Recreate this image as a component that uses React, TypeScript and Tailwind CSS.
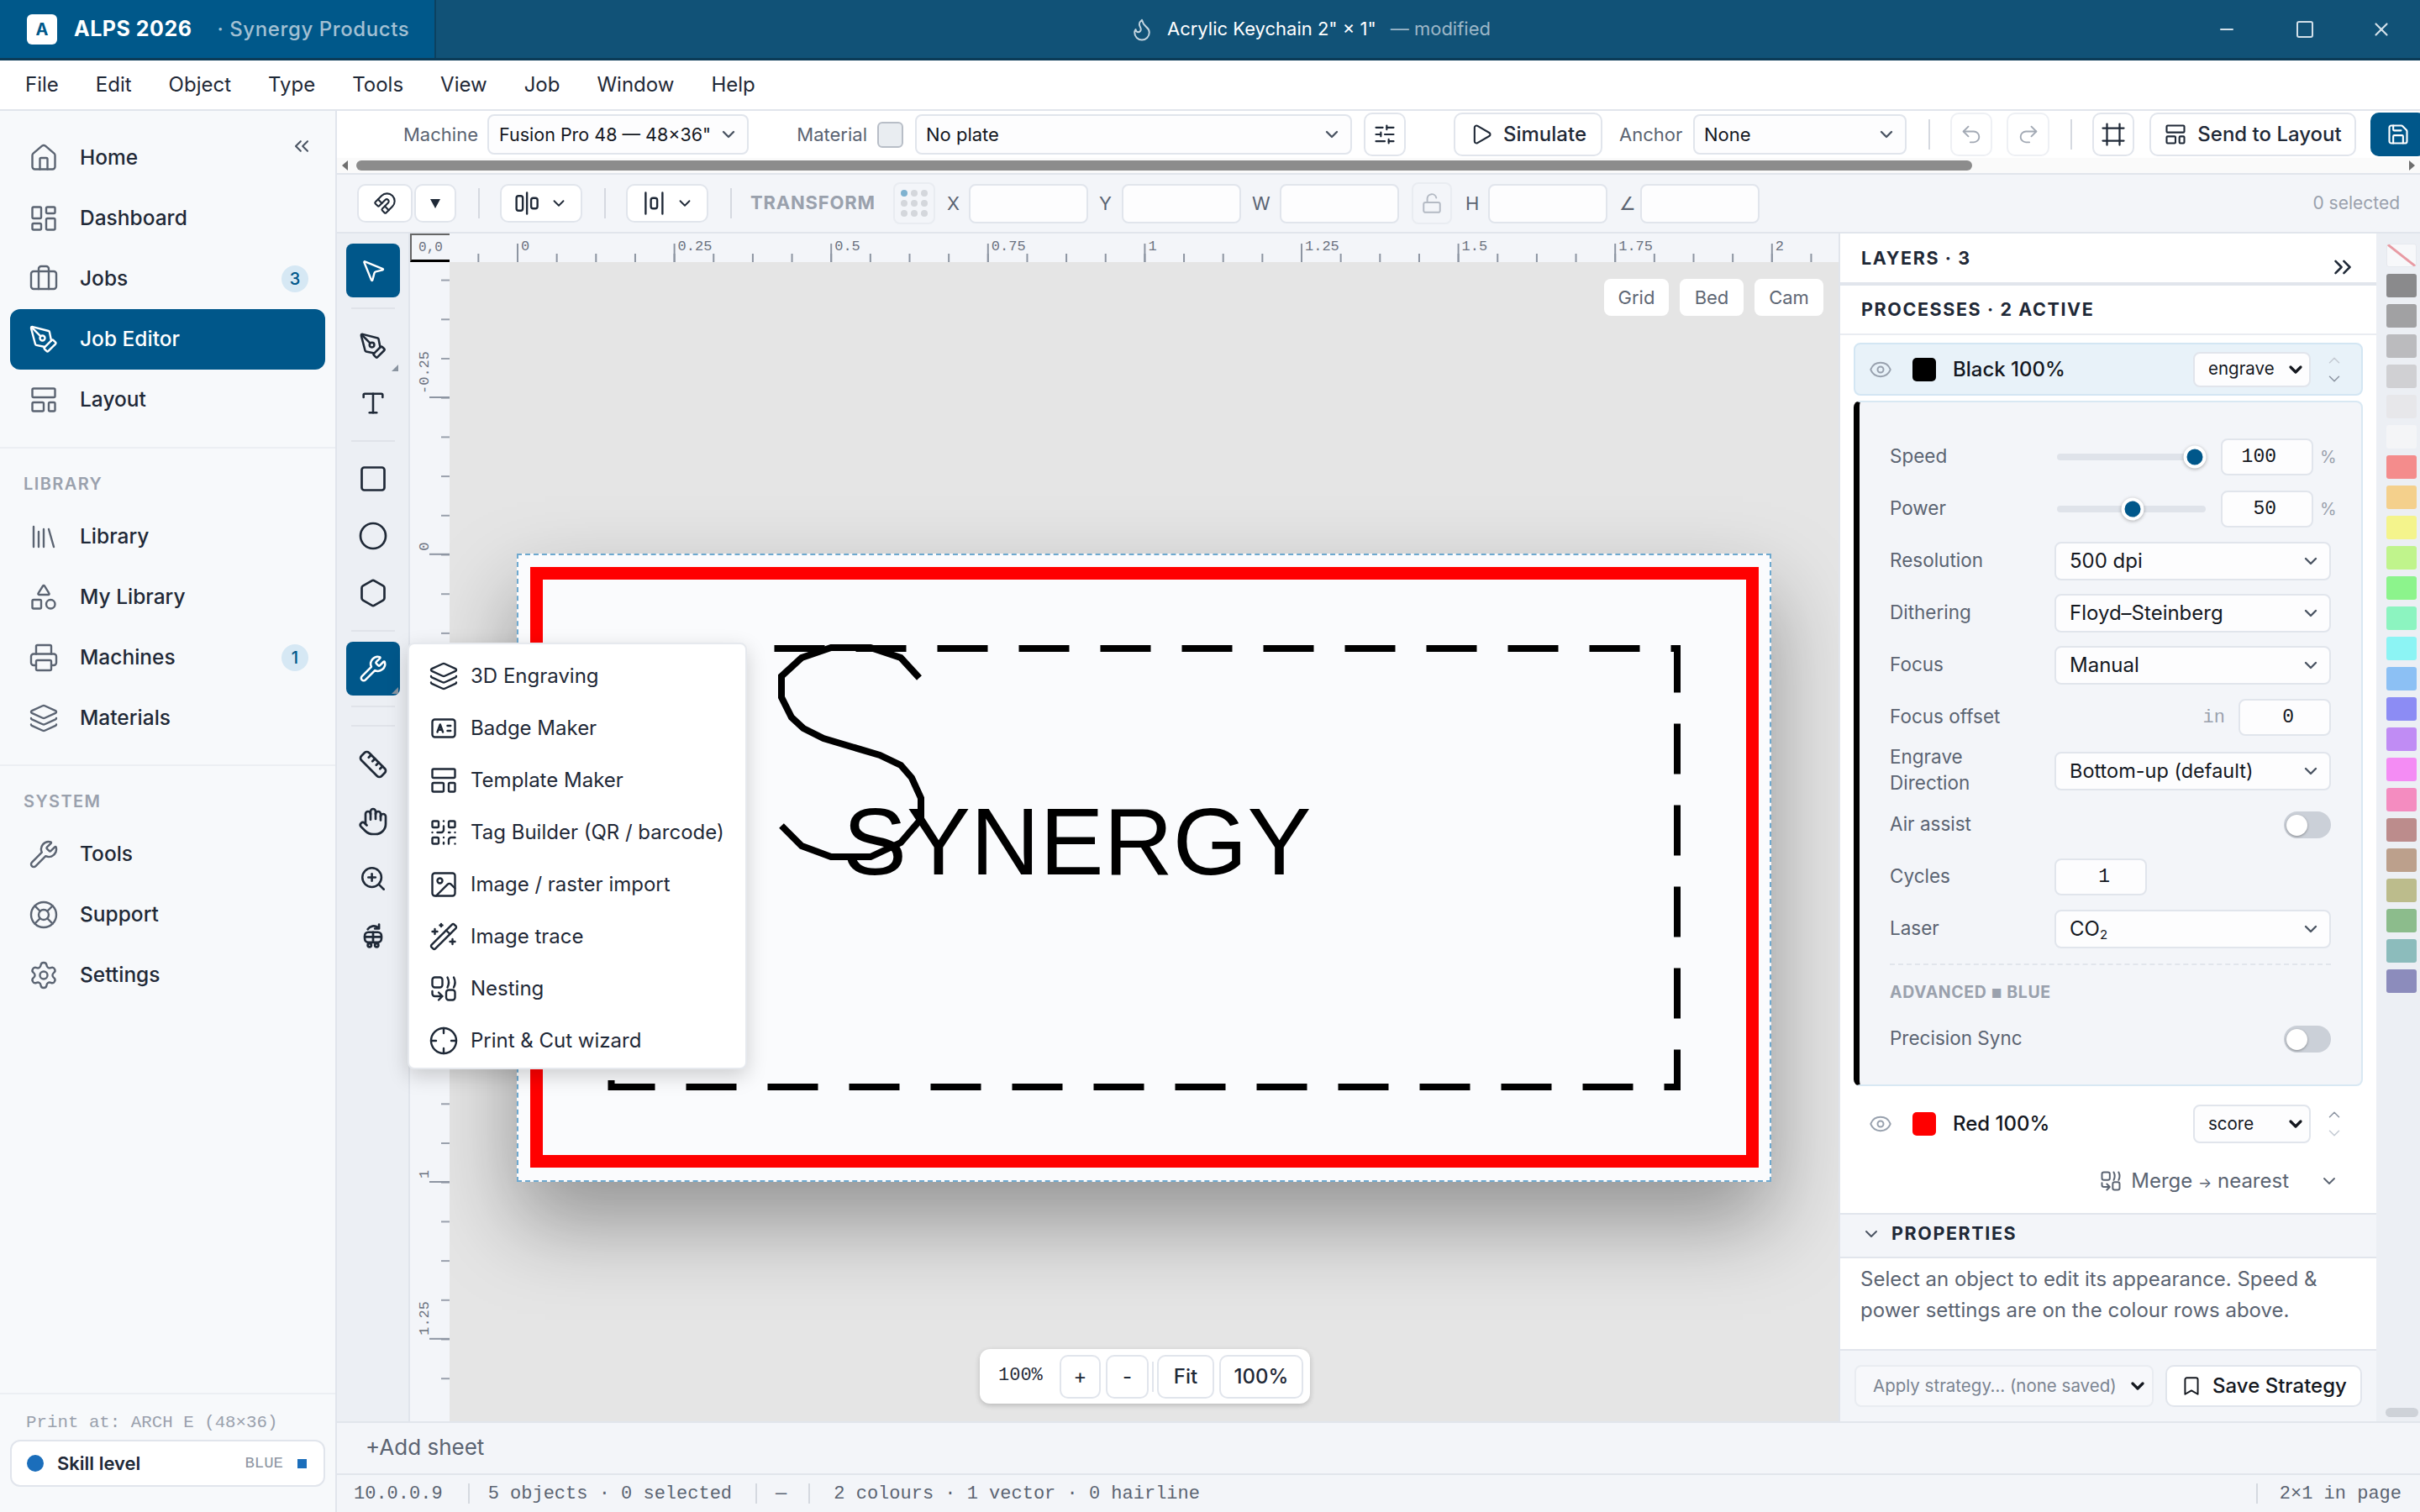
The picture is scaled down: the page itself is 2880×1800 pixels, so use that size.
import type { CSSProperties, ReactNode } from 'react';
import {
	Bookmark,
	Briefcase,
	ChevronDown,
	ChevronUp,
	ChevronsLeft,
	ChevronsRight,
	Circle,
	Crosshair,
	Eye,
	Flame,
	Frame,
	Hand,
	Hexagon,
	House,
	Image,
	Layers,
	LayoutDashboard,
	LayoutTemplate,
	Library,
	LifeBuoy,
	LockOpen,
	Magnet,
	Minus,
	MousePointer2,
	PenTool,
	Play,
	Printer,
	QrCode,
	Redo2,
	Ruler,
	Save,
	Settings,
	Shapes,
	SlidersHorizontal,
	Square,
	Type,
	Undo2,
	WandSparkles,
	Wrench,
	X,
	ZoomIn,
} from 'lucide-react';

const STROKE = 1.6;

const BadgeIcon = ({ size = 36 }: { size?: number }) => (
	<svg width={size} height={size} viewBox="0 0 24 24" fill="none" stroke="currentColor" strokeWidth={STROKE} strokeLinecap="round" strokeLinejoin="round">
		<rect x="3" y="5" width="18" height="14" rx="2" />
		<path d="M7 15l2.2-6 2.2 6M7.8 13.2h2.8M15 10h2.5M15 14h2.5" />
	</svg>
);

const NestIcon = ({ size = 36, sw = STROKE }: { size?: number; sw?: number }) => (
	<svg width={size} height={size} viewBox="0 0 24 24" fill="none" stroke="currentColor" strokeWidth={sw} strokeLinecap="round" strokeLinejoin="round">
		<rect x="3" y="3" width="8" height="8" rx="2" />
		<path d="M15 3c1.3 2.5 1.3 5.5 0 8M20 3c1.3 2.5 1.3 5.5 0 8" />
		<path d="M3 14v2a2 2 0 0 0 2 2h6M8 15l3 3-3 3" />
		<rect x="14" y="13" width="7" height="8" rx="2" />
	</svg>
);

const RobotIcon = ({ size = 36 }: { size?: number }) => (
	<svg width={size} height={size} viewBox="0 0 24 24" fill="none" stroke="currentColor" strokeWidth={1.9} strokeLinecap="round" strokeLinejoin="round">
		<path d="M7.5 6.5a6 6 0 0 1 8.5-1.5M17 2.5V6h-3.5" />
		<rect x="5" y="9" width="14" height="8.5" rx="3" />
		<path d="M5 13h14M12 9v8.5" />
		<circle cx="9" cy="20" r="1.5" />
		<circle cx="15" cy="20" r="1.5" />
	</svg>
);

const AlignSplitIcon = () => (
	<svg width={34} height={30} viewBox="0 0 27 24" fill="none" stroke="currentColor" strokeWidth={1.9} strokeLinecap="round" strokeLinejoin="round">
		<rect x="2" y="5" width="6" height="14" rx="2" />
		<path d="M12 2v20" />
		<rect x="16" y="7" width="6" height="10" rx="2" />
	</svg>
);

const AlignBetweenIcon = () => (
	<svg width={34} height={30} viewBox="0 0 27 24" fill="none" stroke="currentColor" strokeWidth={1.9} strokeLinecap="round" strokeLinejoin="round">
		<path d="M5 2v20M21 2v20" />
		<rect x="10" y="7" width="6" height="10" rx="2" />
	</svg>
);

const menus = ['File', 'Edit', 'Object', 'Type', 'Tools', 'View', 'Job', 'Window', 'Help'];

const mainNav = [
	{ label: 'Home', icon: House },
	{ label: 'Dashboard', icon: LayoutDashboard },
	{ label: 'Jobs', icon: Briefcase, badge: '3' },
	{ label: 'Job Editor', icon: PenTool, active: true },
	{ label: 'Layout', icon: LayoutTemplate },
];
const libraryNav = [
	{ label: 'Library', icon: Library },
	{ label: 'My Library', icon: Shapes },
	{ label: 'Machines', icon: Printer, badge: '1' },
	{ label: 'Materials', icon: Layers },
];
const systemNav = [
	{ label: 'Tools', icon: Wrench },
	{ label: 'Support', icon: LifeBuoy },
	{ label: 'Settings', icon: Settings },
];

const swatches = [
	'#8a8a8c', '#a1a1a3', '#bbbbbe', '#d0d0d3', '#e7e7ea', '#f4f5f7',
	'#f48c8c', '#f4d08c', '#f4f48c', '#c0f48c', '#8cf48c', '#8cf4c0',
	'#8cf4f4', '#8cc0f4', '#8c8cf4', '#c08cf4', '#f48cf4', '#f48cc0',
	'#bc8c8c', '#bca08c', '#bcbc8c', '#8cbc8c', '#8cbcbc', '#8c8cbc',
];

const toolMenu = [
	{ label: '3D Engraving', icon: <Layers size={36} strokeWidth={STROKE} /> },
	{ label: 'Badge Maker', icon: <BadgeIcon /> },
	{ label: 'Template Maker', icon: <LayoutTemplate size={36} strokeWidth={STROKE} /> },
	{ label: 'Tag Builder (QR / barcode)', icon: <QrCode size={36} strokeWidth={STROKE} /> },
	{ label: 'Image / raster import', icon: <Image size={36} strokeWidth={STROKE} /> },
	{ label: 'Image trace', icon: <WandSparkles size={36} strokeWidth={STROKE} /> },
	{ label: 'Nesting', icon: <NestIcon /> },
	{ label: 'Print & Cut wizard', icon: <Crosshair size={36} strokeWidth={STROKE} /> },
];

const NavItem = ({ label, icon: Icon, badge, active }: { label: string; icon: typeof House; badge?: string; active?: boolean }) => (
	<div className={`mx-3 flex h-[72px] items-center rounded-xl pl-[22px] pr-5 ${active ? 'bg-[#00578a] text-white' : 'text-[#1f2937]'}`}>
		<Icon size={36} strokeWidth={STROKE} className={active ? 'text-white' : 'text-[#5b6472]'} />
		<span className="ml-[25px] flex-1 pb-[2px] text-[24.5px] font-medium">{label}</span>
		{badge && (
			<span className="flex h-8 w-8 items-center justify-center rounded-full bg-[#d6e8f4] text-[20px] font-medium text-[#00578a]">{badge}</span>
		)}
	</div>
);

const SectionLabel = ({ children }: { children: ReactNode }) => (
	<div className="flex h-[69px] items-center pl-[28px] pt-[14px] text-[20px] font-semibold tracking-[1.4px] text-[#9aa1ad]">{children}</div>
);

const SelectBox = ({ value, className, muted, bold, size = 'text-[24px]' }: { value: ReactNode; className?: string; muted?: boolean; bold?: boolean; size?: string }) => (
	<div className={`flex items-center justify-between rounded-lg border-2 border-[#e1e5ec] bg-[#fdfdfe] pl-[16px] pr-[10px] ${size} ${muted ? 'text-[#7b8491]' : 'text-[#14181f]'} ${className ?? ''}`}>
		<span className="whitespace-nowrap">{value}</span>
		<ChevronDown size={24} strokeWidth={bold ? 3.2 : 2.4} className={bold ? 'text-[#14181f]' : 'text-[#4b5563]'} />
	</div>
);

const IconBtn = ({ children, className }: { children: ReactNode; className?: string }) => (
	<div className={`flex shrink-0 items-center justify-center rounded-[10px] border-2 border-[#e1e5ec] bg-white text-[#1f2937] ${className ?? ''}`}>{children}</div>
);

const VDivider = ({ className }: { className?: string }) => <div className={`h-9 w-[2px] shrink-0 bg-[#d5d9e0] ${className ?? ''}`} />;

const TextField = ({ className }: { className?: string }) => (
	<input readOnly className={`h-[47px] w-[142px] shrink-0 rounded-lg border-2 border-[#e1e5ec] bg-[#fdfdfe] outline-none ${className ?? ''}`} />
);

const TransformLabel = ({ children, className }: { children: ReactNode; className?: string }) => (
	<span className={`shrink-0 text-[22px] text-[#5b6472] ${className ?? ''}`}>{children}</span>
);

const RailBtn = ({ children, active, corner }: { children: ReactNode; active?: boolean; corner?: boolean }) => (
	<div className={`relative flex h-16 w-16 items-center justify-center rounded-lg ${active ? 'bg-[#00578a] text-white' : 'text-[#1f2937]'}`}>
		{children}
		{corner && <div className="absolute bottom-[2px] right-[2px] h-0 w-0 border-b-[8px] border-l-[8px] border-b-[#8a94a0] border-l-transparent" />}
	</div>
);

const RailDivider = () => <div className="my-2 h-[2px] w-[52px] bg-[#e0e3e9]" />;

const TitleBar = () => (
	<div className="relative flex h-[72px] shrink-0 items-center border-b-[3px] border-[#0b3b57] bg-[#115277] text-white">
		<div className="flex h-full w-[519px] items-center border-r-2 border-[#0c4160] bg-[#00588a] pl-8">
			<div className="flex h-9 w-9 items-center justify-center rounded-md bg-white text-[20px] font-bold text-[#00588a]">A</div>
			<span className="ml-5 text-[25px] font-bold tracking-[0.5px]">ALPS 2026</span>
			<span className="ml-[30px] text-[24px] font-medium tracking-[0.6px] text-[#a3c0d3]">· Synergy Products</span>
		</div>
		<div className="absolute left-[1344px] flex items-center text-[22px]">
			<Flame size={30} strokeWidth={1.6} className="text-[#c4d5e0]" />
			<span className="ml-[15px]">Acrylic Keychain 2" × 1"</span>
			<span className="ml-[17px] text-[#9db7c8]">— modified</span>
		</div>
		<div className="ml-auto flex items-center">
			<Minus size={24} strokeWidth={2} className="mr-[69px] text-[#d3e0e9]" />
			<Square size={24} strokeWidth={2} className="mr-[66px] text-[#d3e0e9]" />
			<X size={26} strokeWidth={2} className="mr-[33px] text-[#d3e0e9]" />
		</div>
	</div>
);

const MenuBar = () => (
	<div className="flex h-[60px] shrink-0 items-center gap-[44px] border-b-2 border-[#e1e5ec] bg-white pl-[30px] text-[24px] text-[#1f2937]">
		{menus.map((m) => (
			<span key={m}>{m}</span>
		))}
	</div>
);

const Sidebar = () => (
	<div className="flex w-[401px] shrink-0 flex-col border-r-2 border-[#e1e5ec] bg-[#f7f9fb]">
		<div className="relative border-b-2 border-[#eceff3] pb-5 pt-5">
			<ChevronsLeft size={28} strokeWidth={1.8} className="absolute right-[26px] top-[28px] text-[#4b5563]" />
			{mainNav.map((n) => (
				<NavItem key={n.label} {...n} />
			))}
		</div>
		<div className="border-b-2 border-[#eceff3] pb-[19px]">
			<SectionLabel>LIBRARY</SectionLabel>
			{libraryNav.map((n) => (
				<NavItem key={n.label} {...n} />
			))}
		</div>
		<div className="flex-1">
			<SectionLabel>SYSTEM</SectionLabel>
			{systemNav.map((n) => (
				<NavItem key={n.label} {...n} />
			))}
		</div>
		<div className="h-[142px] border-t-2 border-[#eceff3] px-3 pt-[18px]">
			<div className="pl-[19px] font-['Liberation_Mono',monospace] text-[20.8px] text-[#9aa1ad]">Print at: ARCH E (48×36)</div>
			<div className="mt-[5px] flex h-14 items-center rounded-xl border-2 border-[#e1e5ec] bg-white pl-[18px] pr-[20px]">
				<div className="h-5 w-5 rounded-full bg-[#1b6ebb]" />
				<span className="ml-4 flex-1 text-[22px] font-semibold text-[#1f2937]">Skill level</span>
				<span className="font-['Liberation_Mono',monospace] text-[19px] text-[#8d95a2]">BLUE</span>
				<div className="ml-[17px] h-[11px] w-[11px] bg-[#1b6ebb]" />
			</div>
		</div>
	</div>
);

const TopToolbar = () => (
	<div className="flex h-[76px] shrink-0 flex-col border-b-2 border-[#e1e5ec] bg-white">
		<div className="flex h-[56px] items-center overflow-hidden text-[24px]">
			<span className="ml-[79px] w-[88px] shrink-0 text-right text-[22px] text-[#5b6472]">Machine</span>
			<SelectBox value={'Fusion Pro 48 — 48×36"'} size="text-[21.5px]" className="ml-[12px] h-12 w-[311px] shrink-0 !pl-3" />
			<span className="ml-[57px] w-[84px] shrink-0 text-right text-[22px] text-[#5b6472]">Material</span>
			<div className="ml-3 h-[31px] w-[31px] shrink-0 rounded-md border-2 border-[#b8bec7] bg-[#e9edf1]" />
			<SelectBox value="No plate" size="text-[22px]" className="ml-[14px] h-12 w-[520px] shrink-0 !pl-[11px]" />
			<IconBtn className="ml-[14px] h-[52px] w-[50px]"><SlidersHorizontal size={28} strokeWidth={1.8} /></IconBtn>
			<IconBtn className="ml-[57px] h-[52px] w-[177px] gap-3"><Play size={28} strokeWidth={1.8} /><span className="font-medium">Simulate</span></IconBtn>
			<span className="ml-5 w-[76px] shrink-0 text-[22px] text-[#5b6472]">Anchor</span>
			<SelectBox value="None" size="text-[22px]" className="ml-3 h-12 w-[254px] shrink-0 !pl-[11px]" />
			<VDivider className="ml-[26px]" />
			<IconBtn className="ml-6 h-[52px] w-[50px] !border-[#eef0f4] !text-[#a2a9b4]"><Undo2 size={28} strokeWidth={1.6} /></IconBtn>
			<IconBtn className="ml-[17px] h-[52px] w-[51px] !border-[#eef0f4] !text-[#a2a9b4]"><Redo2 size={28} strokeWidth={1.6} /></IconBtn>
			<VDivider className="ml-[25px]" />
			<IconBtn className="ml-6 h-[52px] w-[50px]"><Frame size={30} strokeWidth={1.8} /></IconBtn>
			<IconBtn className="ml-[18px] h-[52px] w-[246px] gap-3"><LayoutTemplate size={28} strokeWidth={1.8} /><span className="font-medium">Send to Layout</span></IconBtn>
			<div className="ml-[17px] flex h-[52px] w-[66px] shrink-0 items-center justify-center rounded-[10px] bg-[#00578a] text-white"><Save size={28} strokeWidth={1.8} /></div>
		</div>
		<div className="flex h-[18px] items-center bg-[#fafafa] px-[6px]">
			<div className="h-0 w-0 border-y-[6px] border-r-[7px] border-y-transparent border-r-[#6f6f6f]" />
			<div className="ml-[10px] h-3 w-[1923px] rounded-md bg-[#8c8c8c]" />
			<div className="ml-auto h-0 w-0 border-y-[6px] border-l-[7px] border-y-transparent border-l-[#6f6f6f]" />
		</div>
	</div>
);

const TransformBar = () => (
	<div className="flex h-[70px] shrink-0 items-center border-b-2 border-[#e1e5ec] bg-[#f3f5f9]">
		<IconBtn className="ml-6 h-[46px] w-[66px]"><Magnet size={28} strokeWidth={1.8} /></IconBtn>
		<IconBtn className="ml-[2px] h-[46px] w-[50px]"><div className="h-0 w-0 border-x-[6px] border-t-[11px] border-x-transparent border-t-[#1f2937]" /></IconBtn>
		<VDivider className="ml-[26px]" />
		<IconBtn className="ml-6 h-[46px] w-[98px] gap-2"><AlignSplitIcon /><ChevronDown size={22} strokeWidth={2} /></IconBtn>
		<VDivider className="ml-[26px]" />
		<IconBtn className="ml-6 h-[46px] w-[98px] gap-2"><AlignBetweenIcon /><ChevronDown size={22} strokeWidth={2} /></IconBtn>
		<VDivider className="ml-[26px]" />
		<span className="ml-[22px] w-[148px] shrink-0 pb-[2px] text-[22px] font-bold tracking-[0.8px] text-[#9aa1ad]">TRANSFORM</span>
		<div className="ml-[22px] grid h-[50px] w-[50px] shrink-0 grid-cols-3 place-items-center rounded-lg border-2 border-[#e9ecf1] px-[5px] py-[5px]">
			{Array.from({ length: 9 }).map((_, i) => (
				<div key={i} className={`h-2 w-2 rounded-full ${i === 0 ? 'bg-[#7fb2d0]' : 'bg-[#d4d7dc]'}`} />
			))}
		</div>
		<TransformLabel className="ml-[14px] w-[26px]">X</TransformLabel>
		<TextField />
		<TransformLabel className="ml-[13px] w-[27px]">Y</TransformLabel>
		<TextField />
		<TransformLabel className="ml-[13px] w-[33px]">W</TransformLabel>
		<TextField />
		<div className="ml-[15px] flex h-[50px] w-[48px] shrink-0 items-center justify-center rounded-lg border-2 border-[#e9ecf1] text-[#b4bac4]"><LockOpen size={26} strokeWidth={1.8} /></div>
		<TransformLabel className="ml-4 w-[27px]">H</TransformLabel>
		<TextField />
		<TransformLabel className="ml-[14px] w-[25px]">∠</TransformLabel>
		<TextField />
		<span className="ml-auto mr-6 text-[21px] text-[#9aa1ad]">0 selected</span>
	</div>
);

const ToolRail = () => (
	<div className="flex w-[87px] shrink-0 flex-col items-center gap-1 border-r-2 border-[#e1e5ec] bg-[#eceff4] pt-3">
		<RailBtn active><MousePointer2 size={32} strokeWidth={1.8} /></RailBtn>
		<RailDivider />
		<RailBtn corner><PenTool size={34} strokeWidth={1.8} /></RailBtn>
		<RailBtn><Type size={34} strokeWidth={1.8} /></RailBtn>
		<RailDivider />
		<RailBtn><Square size={36} strokeWidth={1.8} /></RailBtn>
		<RailBtn><Circle size={36} strokeWidth={1.8} /></RailBtn>
		<RailBtn><Hexagon size={36} strokeWidth={1.8} /></RailBtn>
		<RailDivider />
		<RailBtn active corner><Wrench size={34} strokeWidth={1.8} /></RailBtn>
		<RailDivider />
		<div className="my-[1px]"><RailDivider /></div>
		<RailBtn><Ruler size={36} strokeWidth={1.8} /></RailBtn>
		<RailBtn><Hand size={36} strokeWidth={1.8} /></RailBtn>
		<RailBtn><ZoomIn size={34} strokeWidth={1.8} /></RailBtn>
		<RailBtn><RobotIcon size={34} /></RailBtn>
	</div>
);

const hMajor = [
	{ x: 616, t: '0' }, { x: 802.6, t: '0.25' }, { x: 989.2, t: '0.5' }, { x: 1175.8, t: '0.75' }, { x: 1362.4, t: '1' },
	{ x: 1549, t: '1.25' }, { x: 1735.6, t: '1.5' }, { x: 1922.2, t: '1.75' }, { x: 2108.8, t: '2' },
];
const vMajor = [
	{ y: 473, t: '-0.25' }, { y: 659.8, t: '0' }, { y: 846.6, t: '0.25' }, { y: 1033.4, t: '0.5' }, { y: 1220.2, t: '0.75' },
	{ y: 1407, t: '1' }, { y: 1593.8, t: '1.25' },
];

// rulers use page coordinates so they can be checked against the screenshot
const HRuler = () => {
	const minors = Array.from({ length: 37 }, (_, i) => 569.35 + i * 46.65);
	return (
		<svg className="h-[34px] w-[1653px] shrink-0 bg-[#f3f5f9]" viewBox="535 278 1653 34">
			{minors.map((x) => (
				<line key={x} x1={x} x2={x} y1={302} y2={312} stroke="#8d95a2" strokeWidth={2} />
			))}
			{hMajor.map(({ x, t }) => (
				<g key={t}>
					<line x1={x} x2={x} y1={290} y2={312} stroke="#8d95a2" strokeWidth={2} />
					<text x={x + 4} y={298} fontFamily="Liberation Mono, monospace" fontSize={17} fill="#6b7280">{t}</text>
				</g>
			))}
		</svg>
	);
};

const VRuler = () => {
	const minors = Array.from({ length: 29 }, (_, i) => 333.6 + i * 46.7);
	return (
		<svg className="h-[1380px] w-[47px] shrink-0 bg-[#f3f5f9]" viewBox="488 312 47 1380">
			{minors.map((y) => (
				<line key={y} x1={525} x2={535} y1={y} y2={y} stroke="#9aa1ad" strokeWidth={2} />
			))}
			{vMajor.map(({ y, t }) => (
				<g key={t}>
					<line x1={511} x2={535} y1={y} y2={y} stroke="#8d95a2" strokeWidth={2} />
					<text transform={`translate(510 ${y - 4}) rotate(-90)`} fontFamily="Liberation Mono, monospace" fontSize={17} fill="#6b7280">{t}</text>
				</g>
			))}
		</svg>
	);
};

const Artwork = () => (
	<svg className="block h-full w-full" viewBox="615 659 1493 748">
		<rect x="638.5" y="682.5" width="1447" height="700" fill="none" stroke="#ff0000" strokeWidth={15} />
		<rect x="727.5" y="772" width="1268.5" height="522" fill="none" stroke="#000" strokeWidth={8} strokeDasharray="60 37" />
		<polyline
			points="1094,807 1072,783 1036,771 989,771 954,783 930,805 930,830 942,854 956,867 980,879 1047,899 1072,911 1085,926 1096,950 1096,975 1072,1003 1036,1020 989,1020 954,1007 930,983"
			fill="none"
			stroke="#000"
			strokeWidth={8}
		/>
		<text x="1003" y="1041" fontFamily="Liberation Sans, Arial, sans-serif" fontSize={114} fill="#000">SYNERGY</text>
	</svg>
);

const CanvasArea = () => (
	<div className="relative flex-1 overflow-hidden bg-[#e5e5e5]">
		<div className="absolute left-[80px] top-[347px] h-[748px] w-[1493px] bg-[#fafbfd] shadow-[0_48px_96px_rgba(0,0,0,0.36)] outline-2 -outline-offset-2 outline-dashed outline-[#6ea9cf]">
			<Artwork />
		</div>
		<div className="absolute right-[18px] top-5 flex gap-[13px] text-[22px] text-[#5f6875]">
			<div className="flex h-11 w-[77px] items-center justify-center rounded-lg bg-white">Grid</div>
			<div className="flex h-11 w-[76px] items-center justify-center rounded-lg bg-white">Bed</div>
			<div className="flex h-11 w-[82px] items-center justify-center rounded-lg bg-white">Cam</div>
		</div>
		<div className="absolute bottom-[21px] left-[631px] flex h-[65px] w-[393px] items-center rounded-xl bg-white pl-[22px] pr-[6px] shadow-[0_2px_6px_rgba(0,0,0,0.2)]">
			<span className="w-[73px] pb-[2px] font-['Liberation_Mono',monospace] text-[22px] text-[#1f2937]">100%</span>
			<IconBtn className="h-[52px] w-[49px] text-[24px]">+</IconBtn>
			<IconBtn className="ml-[6px] h-[52px] w-[51px] text-[24px]">-</IconBtn>
			<div className="ml-1 mr-1 h-9 w-[2px] bg-[#e1e5ec]" />
			<IconBtn className="h-[52px] w-[68px] text-[24px] font-medium">Fit</IconBtn>
			<IconBtn className="ml-[6px] h-[52px] w-[100px] text-[24px] font-medium">100%</IconBtn>
		</div>
	</div>
);

const ToolMenu = () => (
	<div className="absolute left-[84px] top-[487px] z-10 flex h-[508px] w-[404px] flex-col rounded-lg border-2 border-[#e6e9ee] bg-white py-[7px] shadow-[0_8px_24px_rgba(0,0,0,0.18)]">
		{toolMenu.map((item) => (
			<div key={item.label} className="flex h-[62px] shrink-0 items-center pl-[23px] text-[24px] text-[#1f2937]">
				<span className="flex w-[50px] shrink-0 justify-start text-[#1f2937]">{item.icon}</span>
				<span className="whitespace-nowrap">{item.label}</span>
			</div>
		))}
	</div>
);

const PanelHeading = ({ children }: { children: ReactNode }) => (
	<span className="text-[21.5px] font-bold tracking-[1.6px] text-[#1f2937]">{children}</span>
);

const Row = ({ label, children, h = 'h-[62px]' }: { label: ReactNode; children: ReactNode; h?: string }) => (
	<div className={`flex items-center ${h}`}>
		<div className="w-[196px] shrink-0 pb-[4px] text-[22.5px] leading-[31px] text-[#5b6472]">{label}</div>
		{children}
	</div>
);

const NumField = ({ value, className }: { value: string; className?: string }) => (
	<div className={`flex h-11 w-[110px] shrink-0 items-center justify-end rounded-lg border-2 border-[#e1e5ec] bg-[#fdfdfe] pr-[42px] font-['Liberation_Mono',monospace] text-[23px] text-[#14181f] ${className ?? ''}`}>{value}</div>
);

const Slider = ({ pos }: { pos: string }) => (
	<div className="relative ml-[3px] h-2 w-[177px] shrink-0 rounded-full bg-[#dfe3ea]">
		<div className={`absolute top-1/2 h-[27px] w-[27px] -translate-x-1/2 -translate-y-1/2 rounded-full border-[4px] border-white bg-[#00578a] shadow-[0_1px_4px_rgba(0,0,0,0.3)] ${pos}`} />
	</div>
);

const Toggle = () => (
	<div className="ml-auto flex h-8 w-14 items-center rounded-full bg-[#cbd0d8] pl-[3px]">
		<div className="h-[25px] w-[25px] rounded-full bg-white shadow-[0_1px_3px_rgba(0,0,0,0.35)]" />
	</div>
);

const RightPanel = () => (
	<div className="flex w-[638px] shrink-0 flex-col bg-white">
		<div className="relative flex h-[62px] shrink-0 items-center border-b-4 border-[#e1e5ec] pl-[25px]">
			<PanelHeading>LAYERS · 3</PanelHeading>
			<ChevronsRight size={34} strokeWidth={1.8} className="absolute bottom-[1px] right-[23px] text-[#1f2937]" />
		</div>
		<div className="flex h-[59px] shrink-0 items-center border-b-2 border-[#e9ecf1] pl-[25px]">
			<PanelHeading>PROCESSES · 2 ACTIVE</PanelHeading>
		</div>
		<div className="flex-1 px-4 pt-[9px]">
			<div className="flex h-[63px] items-center rounded-lg border-2 border-[#d3e6f3] bg-[#e8f2f9] pl-[16px]">
				<Eye size={28} strokeWidth={1.7} className="text-[#98a1ae]" />
				<div className="ml-[24px] h-7 w-7 rounded-[5px] bg-black" />
				<span className="ml-[20px] flex-1 text-[24px] font-medium text-[#14181f]">Black 100%</span>
				<SelectBox value="engrave" bold size="text-[20.5px]" className="h-[42px] w-[140px] !pl-4 !pr-[4px]" />
				<div className="ml-4 mr-[20px] flex w-6 flex-col items-center">
					<ChevronUp size={22} strokeWidth={1.7} className="text-[#c5cbd4]" />
					<ChevronDown size={22} strokeWidth={1.7} className="text-[#8d95a2]" />
				</div>
			</div>
			<div className="mt-[6px] h-[816px] rounded-lg border-2 border-l-[7px] border-[#d8e8f3] border-l-black bg-[#f3f5f9] pl-[36px] pr-[36px] pt-[34px]">
				<Row label="Speed">
					<Slider pos="left-[92.6%]" />
					<NumField value="100" className="ml-[18px]" />
					<span className="ml-2 text-[20px] text-[#9aa1ad]">%</span>
				</Row>
				<Row label="Power">
					<Slider pos="left-[51%]" />
					<NumField value="50" className="ml-[18px]" />
					<span className="ml-2 text-[20px] text-[#9aa1ad]">%</span>
				</Row>
				<Row label="Resolution"><SelectBox value="500 dpi" className="h-[46px] flex-1" /></Row>
				<Row label="Dithering"><SelectBox value="Floyd–Steinberg" className="h-[46px] flex-1" /></Row>
				<Row label="Focus"><SelectBox value="Manual" className="h-[46px] flex-1" /></Row>
				<Row label="Focus offset">
					<span className="ml-auto font-['Liberation_Mono',monospace] text-[22px] text-[#9aa1ad]">in</span>
					<NumField value="0" className="ml-4" />
				</Row>
				<Row label={<>Engrave<br />Direction</>} h="h-[66px]"><SelectBox value="Bottom-up (default)" size="text-[23.5px]" className="h-[46px] flex-1" /></Row>
				<Row label="Air assist"><Toggle /></Row>
				<Row label="Cycles"><NumField value="1" /></Row>
				<Row label="Laser"><SelectBox value={<>CO<sub className="text-[15px]">2</sub></>} className="h-[46px] flex-1" /></Row>
				<div className="mt-[10px] border-t-2 border-dashed border-[#e1e5ec] pt-[18px] text-[19.5px] font-bold tracking-[0.6px] text-[#9aa1ad]">ADVANCED <span className="text-[14px]">■</span> BLUE</div>
				<Row label="Precision Sync" h="h-[62px] mt-[10px]"><Toggle /></Row>
			</div>
			<div className="mt-[12px] flex h-[66px] items-center pl-[18px]">
				<Eye size={28} strokeWidth={1.7} className="text-[#98a1ae]" />
				<div className="ml-[24px] h-7 w-7 rounded-[5px] bg-[#ff0000]" />
				<span className="ml-[20px] flex-1 text-[24px] font-medium text-[#14181f]">Red 100%</span>
				<SelectBox value="score" bold size="text-[20.5px]" className="h-[46px] w-[140px] !pl-4 !pr-[4px]" />
				<div className="ml-4 mr-[22px] flex w-6 flex-col items-center">
					<ChevronUp size={22} strokeWidth={1.7} className="text-[#8d95a2]" />
					<ChevronDown size={22} strokeWidth={1.7} className="text-[#c5cbd4]" />
				</div>
			</div>
			<div className="mt-[17px] flex items-center justify-end pr-[28px] text-[24px] text-[#5b6472]">
				<NestIcon size={28} sw={1.7} />
				<span className="ml-[10px]">Merge <span className="text-[17px]">→</span> nearest</span>
				<ChevronDown size={24} strokeWidth={1.9} className="ml-[36px]" />
			</div>
		</div>
		<div className="flex h-[54px] shrink-0 items-center border-y-2 border-[#e1e5ec] bg-[#f3f5f9] pb-[5px] pl-[25px]">
			<ChevronDown size={24} strokeWidth={2} className="text-[#4b5563]" />
			<span className="ml-[12px] text-[21.5px] font-bold tracking-[1.6px] text-[#1f2937]">PROPERTIES</span>
		</div>
		<div className="h-[110px] shrink-0 border-b-2 border-[#e1e5ec] px-[24px] pt-[6px] text-[24px] leading-[37px] text-[#5b6472]">
			Select an object to edit its appearance. Speed &amp; power settings are on the colour rows above.
		</div>
		<div className="flex h-[84px] shrink-0 items-center bg-[#f3f5f9] pl-[17px]">
			<SelectBox value="Apply strategy… (none saved)" muted bold size="text-[20.5px]" className="h-[50px] w-[356px] !border-[#e9ecf1] !bg-[#f7f8fb] !pl-5 !pr-[5px]" />
			<IconBtn className="ml-[14px] h-[50px] w-[234px] gap-3 text-[24px] font-medium !text-[#14181f]"><Bookmark size={26} strokeWidth={1.8} />Save Strategy</IconBtn>
		</div>
	</div>
);

const SwatchRail = () => (
	<div className="flex w-[52px] shrink-0 flex-col items-center gap-2 bg-[#eceff4] pl-[8px] pt-3">
		<div className="relative h-[28px] w-[36px] overflow-hidden rounded-[3px] border border-[#e6e9ee] bg-[#f7f8fa]">
			<div className="absolute left-1/2 top-1/2 h-[3px] w-[52px] -translate-x-1/2 -translate-y-1/2 rotate-[38deg] bg-[#e89aa3]" />
		</div>
		{swatches.map((c) => (
			<div key={c} className="h-[28px] w-[36px] rounded-[3px] bg-[var(--c)]" style={{ '--c': c } as CSSProperties} />
		))}
		<div className="mt-auto mb-[5px] h-[11px] w-[39px] rounded-full bg-[#ced2d8]" />
	</div>
);

const StatusBar = () => (
	<div className="flex h-[46px] shrink-0 items-center border-t-2 border-[#e1e5ec] bg-[#f3f5f9] pl-[20px] font-['Liberation_Mono',monospace] text-[22px] text-[#5b6472]">
		<span>10.0.0.9</span>
		<div className="ml-[30px] h-6 w-[2px] bg-[#d5d9e0]" />
		<span className="ml-[22px]">5 objects · 0 selected</span>
		<div className="ml-[28px] h-6 w-[2px] bg-[#d5d9e0]" />
		<span className="ml-[22px]">—</span>
		<div className="ml-[26px] h-6 w-[2px] bg-[#d5d9e0]" />
		<span className="ml-[28px]">2 colours · 1 vector · 0 hairline</span>
		<div className="ml-auto h-6 w-[2px] bg-[#d5d9e0]" />
		<span className="ml-[26px] mr-[22px]">2×1 in page</span>
	</div>
);

export default function App() {
	return (
		<div className="flex h-[1800px] w-[2880px] flex-col overflow-hidden bg-white font-['Inter',sans-serif]">
			<TitleBar />
			<MenuBar />
			<div className="flex min-h-0 flex-1">
				<Sidebar />
				<div className="flex min-w-0 flex-1 flex-col">
					<TopToolbar />
					<TransformBar />
					<div className="relative flex min-h-0 flex-1">
						<ToolRail />
						<div className="flex w-[1702px] shrink-0 flex-col border-r-2 border-[#e1e5ec]">
							<div className="flex h-[34px] shrink-0">
								<div className="flex w-[47px] items-center justify-center border-b-[3px] border-l-2 border-t-2 border-black border-l-[#666] border-t-[#666] bg-[#f3f5f9] font-['Liberation_Mono',monospace] text-[16px] text-[#6b7280]">0,0</div>
								<HRuler />
							</div>
							<div className="flex min-h-0 flex-1">
								<VRuler />
								<CanvasArea />
							</div>
						</div>
						<RightPanel />
						<SwatchRail />
						<ToolMenu />
					</div>
					<div className="flex h-[62px] shrink-0 items-center border-t-2 border-[#e1e5ec] bg-[#f3f5f9] pb-[3px] pl-[34px] text-[26px] text-[#5b6472]">+Add sheet</div>
					<StatusBar />
				</div>
			</div>
		</div>
	);
}
